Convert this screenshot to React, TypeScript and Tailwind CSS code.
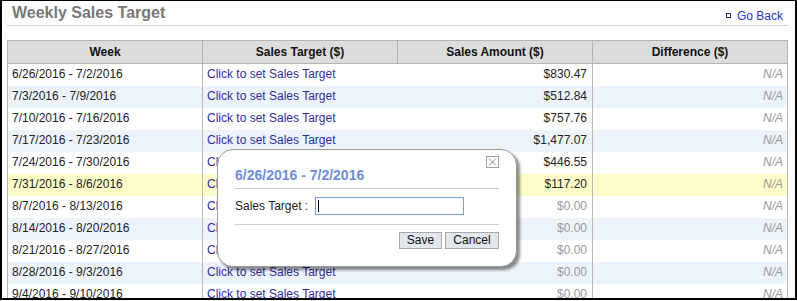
import React from "react";

const rows = [
  { week: "6/26/2016 - 7/2/2016", amount: "$830.47" },
  { week: "7/3/2016 - 7/9/2016", amount: "$512.84" },
  { week: "7/10/2016 - 7/16/2016", amount: "$757.76" },
  { week: "7/17/2016 - 7/23/2016", amount: "$1,477.07" },
  { week: "7/24/2016 - 7/30/2016", amount: "$446.55" },
  { week: "7/31/2016 - 8/6/2016", amount: "$117.20", current: true },
  { week: "8/7/2016 - 8/13/2016", amount: "$0.00" },
  { week: "8/14/2016 - 8/20/2016", amount: "$0.00" },
  { week: "8/21/2016 - 8/27/2016", amount: "$0.00" },
  { week: "8/28/2016 - 9/3/2016", amount: "$0.00" },
  { week: "9/4/2016 - 9/10/2016", amount: "$0.00" },
];

function TargetDialog() {
  return (
    <div className="absolute left-[215px] top-[148px] w-[300px] rounded-[16px] border border-[#9a9a9a] bg-white px-[17px] pb-[17px] pt-[17px] shadow-[3px_3px_3px_rgba(0,0,0,0.45)]">
      <button
        type="button"
        className="absolute right-[17px] top-[6px] flex h-[12px] w-[13px] items-center justify-center border border-[#a0a0a0] bg-white"
      >
        <svg width="9" height="8" viewBox="0 0 9 8">
          <path d="M1 0.5 L8 7.5 M8 0.5 L1 7.5" stroke="#909090" strokeWidth="1" />
        </svg>
      </button>
      <div className="border-b border-[#cccccc] pb-[5px] text-[14px] font-bold leading-[16px] text-[#6e8cd7]">
        6/26/2016 - 7/2/2016
      </div>
      <div className="mt-[8px] flex items-center border-b border-[#cccccc] pb-[9px]">
        <span className="w-[80px] text-[12px] leading-[18px] text-[#222]">Sales Target :</span>
        <div className="relative h-[18px] w-[149px] border border-[#7b9fdb] bg-white shadow-[inset_0_0_1px_rgba(90,130,210,0.5)]">
          <span className="absolute left-[2px] top-[2px] h-[12px] w-px bg-black" />
        </div>
      </div>
      <div className="mt-[7px] flex justify-end gap-[3px]">
        <button
          type="button"
          className="h-[17px] w-[43px] border border-[#a9a9a9] bg-[#e2e6ed] text-[12px] leading-[15px] text-[#111]"
        >
          Save
        </button>
        <button
          type="button"
          className="h-[17px] w-[54px] border border-[#a9a9a9] bg-[#e2e6ed] text-[12px] leading-[15px] text-[#111]"
        >
          Cancel
        </button>
      </div>
    </div>
  );
}

export default function App() {
  return (
    <div className="h-[301px] w-[797px] bg-white font-['Liberation_Sans',Arial,sans-serif]">
      <div className="relative h-[300px] w-[797px] overflow-hidden border-x-2 border-b-2 border-t border-black">
        <div className="ml-[5px] flex w-[781px] items-baseline justify-between border-b border-[#cfcfcf] pb-[2px] pl-[5px] pr-[5px] pt-[3px]">
          <h1 className="text-[16px] font-bold leading-[18px] text-[#777777]">Weekly Sales Target</h1>
          <a href="#" className="flex items-center gap-[6px] text-[12px] leading-[14px] text-[#2236c8]">
            <span className="inline-block h-[5px] w-[5px] border border-[#1c2a6e]" />
            Go Back
          </a>
        </div>

        <div className="ml-[5px] mt-[14px] w-[781px] border-r border-[#b8b8b8] text-[12px]">
          <div className="grid grid-cols-[195px_195px_195px_195px] border-y border-[#b4b4b4] bg-[#dddddd] font-bold leading-[22px] text-[#111]">
            <div className="border-l border-[#b4b4b4] text-center">Week</div>
            <div className="border-l border-[#b4b4b4] text-center">Sales Target ($)</div>
            <div className="border-l border-[#b4b4b4] text-center">Sales Amount ($)</div>
            <div className="border-l border-[#b4b4b4] text-center">Difference ($)</div>
          </div>
          {rows.map((row, i) => {
            const bg = row.current ? "bg-[#fefdc9]" : i % 2 === 1 ? "bg-[#edf3fb]" : "bg-white";
            const zero = row.amount === "$0.00";
            return (
              <div key={row.week} className={`grid grid-cols-[195px_195px_195px_195px] leading-[20px] ${bg}`}>
                <div className="border-l border-[#b8b8b8] pb-[2px] pl-[4px] text-[#222]">{row.week}</div>
                <div className="border-l border-[#b8b8b8] pb-[2px] pl-[4px]">
                  <a href="#" className="text-[#2e2e9e]">
                    Click to set Sales Target
                  </a>
                </div>
                <div className={`pb-[2px] pr-[5px] text-right ${zero ? "text-[#9a9a9a]" : "text-[#222]"}`}>{row.amount}</div>
                <div className="border-l border-[#b8b8b8] pb-[2px] pr-[4px] text-right italic text-[#9a9a9a]">N/A</div>
              </div>
            );
          })}
        </div>

        <TargetDialog />
      </div>
    </div>
  );
}
